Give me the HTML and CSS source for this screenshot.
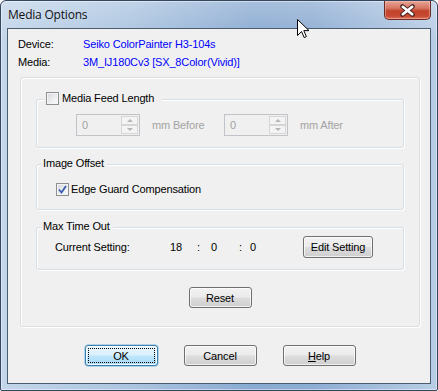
FILE: index.html
```html
<!DOCTYPE html>
<html lang="en">
<head>
    <meta charset="UTF-8">
    <title>Media Options</title>
    <link rel="stylesheet" href="styles.css">
</head>
<body>
    <div class="window">
        <div class="titlebar">
            <span class="title">Media Options</span>
            <div class="close-btn">
                <svg width="17" height="13" viewBox="0 0 17 13">
                    <path d="M3.5 2.5 L13.5 10.5 M13.5 2.5 L3.5 10.5" stroke="#4a2a26" stroke-width="4.6" stroke-linecap="round" fill="none"/>
                    <path d="M3.8 2.8 L13.2 10.2 M13.2 2.8 L3.8 10.2" stroke="#ffffff" stroke-width="2.6" stroke-linecap="round" fill="none"/>
                </svg>
            </div>
        </div>

        <div class="client">
            <div class="info">
                <div class="info-row"><span class="info-label">Device:</span><span class="info-value">Seiko ColorPainter H3-104s</span></div>
                <div class="info-row"><span class="info-label">Media:</span><span class="info-value">3M_IJ180Cv3 [SX_8Color(Vivid)]</span></div>
            </div>

            <div class="panel">
                <!-- Media Feed Length -->
                <div class="group group-feed">
                    <div class="group-title title-check"><span class="checkbox"></span>Media Feed Length</div>
                    <div class="feed-row">
                        <div class="spin">
                            <span class="spin-value">0</span>
                            <div class="spin-btns"><span class="spin-btn up"></span><span class="spin-btn down"></span></div>
                        </div>
                        <span class="spin-label">mm Before</span>
                        <div class="spin">
                            <span class="spin-value">0</span>
                            <div class="spin-btns"><span class="spin-btn up"></span><span class="spin-btn down"></span></div>
                        </div>
                        <span class="spin-label">mm After</span>
                    </div>
                </div>

                <!-- Image Offset -->
                <div class="group group-offset">
                    <div class="group-title">Image Offset</div>
                    <div class="check-row">
                        <span class="checkbox checked">
                            <svg width="9" height="9" viewBox="0 0 9 9"><path d="M1 4.5 L3.5 7.5 L8 1" stroke="#3a5cae" stroke-width="1.8" fill="none"/></svg>
                        </span>
                        Edge Guard Compensation
                    </div>
                </div>

                <!-- Max Time Out -->
                <div class="group group-time">
                    <div class="group-title">Max Time Out</div>
                    <div class="time-row">
                        <span class="time-label">Current Setting:</span>
                        <span class="t-hour">18</span>
                        <span class="t-sep1">:</span>
                        <span class="t-min">0</span>
                        <span class="t-sep2">:</span>
                        <span class="t-sec">0</span>
                        <button class="btn btn-edit">Edit Setting</button>
                    </div>
                </div>

                <div class="reset-row"><button class="btn btn-reset">Reset</button></div>
            </div>

            <div class="footer">
                <button class="btn btn-default"><span class="focus-ring">OK</span></button>
                <button class="btn">Cancel</button>
                <button class="btn"><span><u>H</u>elp</span></button>
            </div>
        </div>

        <svg class="cursor" width="13" height="20" viewBox="0 0 13 20">
            <path d="M0.5 0.5 L0.5 16.5 L4.5 12.5 L7.2 18.6 L9.4 17.6 L6.8 11.6 L12 11.6 Z" fill="#ffffff" stroke="#000000" stroke-width="1"/>
        </svg>
    </div>
</body>
</html>
```

FILE: styles.css
```css
body {
    margin: 0;
    background: #ffffff;
    font-family: 'Liberation Sans', Arial, sans-serif;
    font-size: 11px;
    letter-spacing: -0.15px;
    color: #000;
}
.window {
    position: relative;
    width: 438px;
    height: 391px;
    box-sizing: border-box;
    border: 1px solid #34475e;
    border-radius: 6px 6px 2px 2px;
    padding: 0 6px 6px 6px;
    background:
        linear-gradient(180deg, rgba(255, 255, 255, 0.25) 0, rgba(255, 255, 255, 0) 40px),
        linear-gradient(90deg, #c3d6ea 0%, #abc4e0 30%, #8aaad1 58%, #8eadd3 72%, #b9cee6 100%);
    box-shadow: inset 0 0 0 1px rgba(255, 255, 255, 0.45);
}
.titlebar {
    display: flex;
    height: 27px;
    align-items: flex-start;
}
.title {
    margin-top: 6px;
    padding-left: 1px;
    line-height: 16px;
    font-family: 'Open Sans', 'Noto Sans', sans-serif;
    font-size: 12px;
    letter-spacing: -0.2px;
    color: #111;
}
.close-btn {
    margin-left: auto;
    width: 47px;
    height: 19px;
    box-sizing: border-box;
    border: 1px solid #6a2c24;
    border-top: none;
    border-radius: 0 0 5px 5px;
    background: linear-gradient(180deg, #e6a596 0%, #d67561 40%, #c2432c 55%, #c94a33 85%, #dd7a60 100%);
    box-shadow: inset 0 0 0 1px rgba(255, 200, 190, 0.45);
    display: flex;
    justify-content: center;
    align-items: center;
}
.client {
    border: 1px solid #4d5d70;
    background: #f0f0f0;
    height: 354px;
}
.info {
    padding: 6px 0 0 10px;
}
.info-row {
    display: flex;
    line-height: 18px;
}
.info-label {
    width: 65px;
}
.info-value {
    color: #0000ff;
}
.panel {
    margin: 6px 0 0 12px;
    width: 400px;
    height: 250px;
    box-sizing: border-box;
    border: 1px solid #d9dee3;
    border-radius: 3px;
    padding: 21px 15px 0 15px;
    box-shadow: 1px 1px 0 #ffffff, inset 1px 1px 0 #ffffff;
}
.group {
    border: 1px solid #d5dfe5;
    border-radius: 3px;
    box-shadow: 1px 1px 0 #ffffff, inset 1px 1px 0 #ffffff;
}
.group-title {
    display: flex;
    align-items: center;
    width: fit-content;
    margin-top: -8px;
    margin-left: 4px;
    padding: 0 3px 0 2px;
    line-height: 13px;
    height: 13px;
    background: #f0f0f0;
}
.title-check {
    margin-left: 7px;
    padding-right: 8px;
}
.checkbox {
    display: inline-flex;
    justify-content: center;
    align-items: center;
    width: 13px;
    height: 13px;
    box-sizing: border-box;
    border: 1px solid #8e8f8f;
    background: linear-gradient(135deg, #d4d7dc 0%, #eef0f2 60%, #fafafa 100%);
    box-shadow: inset 0 0 0 1px #f4f4f4;
    margin-right: 3px;
    flex-shrink: 0;
}
.checkbox.checked {
    margin-right: 2px;
}
.group-feed {
    padding-bottom: 11px;
}
.feed-row {
    display: flex;
    align-items: center;
    margin: 9px 0 0 39px;
    color: #a3a3a3;
}
.spin {
    display: flex;
    width: 64px;
    height: 22px;
    box-sizing: border-box;
    border: 1px solid #c0c4c8;
    background: #f0f0f0;
}
.spin-value {
    flex: 1;
    padding-left: 5px;
    line-height: 20px;
}
.spin-btns {
    display: flex;
    flex-direction: column;
    width: 17px;
    padding: 1px 1px 1px 0;
}
.spin-btn {
    flex: 1;
    border: 1px solid #d6d6d6;
    background: #f4f4f4;
    display: flex;
    justify-content: center;
    align-items: center;
}
.spin-btn::before {
    content: "";
    border-left: 3px solid transparent;
    border-right: 3px solid transparent;
}
.spin-btn.up::before {
    border-bottom: 3px solid #b5b5b5;
}
.spin-btn.down::before {
    border-top: 3px solid #b5b5b5;
}
.spin-label {
    width: 84px;
    padding-left: 12px;
    box-sizing: border-box;
    line-height: 20px;
}
.group-offset {
    margin-top: 16px;
    padding-bottom: 13px;
}
.check-row {
    display: flex;
    align-items: center;
    margin: 13px 0 0 19px;
    line-height: 13px;
}
.group-time {
    margin-top: 17px;
    padding-bottom: 11px;
}
.time-row {
    display: flex;
    align-items: center;
    margin: 3px 0 0 18px;
    height: 22px;
}
.time-label { width: 115px; }
.t-hour { width: 27px; }
.t-sep1 { width: 14px; }
.t-min { width: 28px; }
.t-sep2 { width: 11px; }
.t-sec { width: 53px; }
.btn {
    font-family: inherit;
    font-size: 11px;
    letter-spacing: inherit;
    color: #000;
    padding: 0;
    height: 21px;
    box-sizing: border-box;
    border: 1px solid #707070;
    border-radius: 3px;
    background: linear-gradient(180deg, #f2f2f2 0%, #ebebeb 48%, #dddddd 52%, #cfcfcf 100%);
    box-shadow: inset 0 0 0 1px rgba(255, 255, 255, 0.7);
    display: flex;
    justify-content: center;
    align-items: center;
}
.btn-edit {
    width: 70px;
    height: 22px;
}
.reset-row {
    display: flex;
    justify-content: center;
    margin-top: 17px;
}
.btn-reset {
    width: 63px;
}
.footer {
    display: flex;
    justify-content: center;
    gap: 26px;
    margin-top: 18px;
    padding-left: 2px;
}
.footer .btn {
    width: 73px;
}
.btn-default {
    border-color: #3c7fb1;
    background: linear-gradient(180deg, #eaf6fd 0%, #d9f0fc 48%, #bee6fd 52%, #a7d9f5 100%);
    box-shadow: inset 0 0 0 1px rgba(255, 255, 255, 0.8), 0 0 0 0.5px #74b4dc;
}
.focus-ring {
    display: flex;
    justify-content: center;
    align-items: center;
    width: 65px;
    height: 13px;
    border: 1px dotted #000;
}
.cursor {
    position: absolute;
    left: 296px;
    top: 18px;
}
```
